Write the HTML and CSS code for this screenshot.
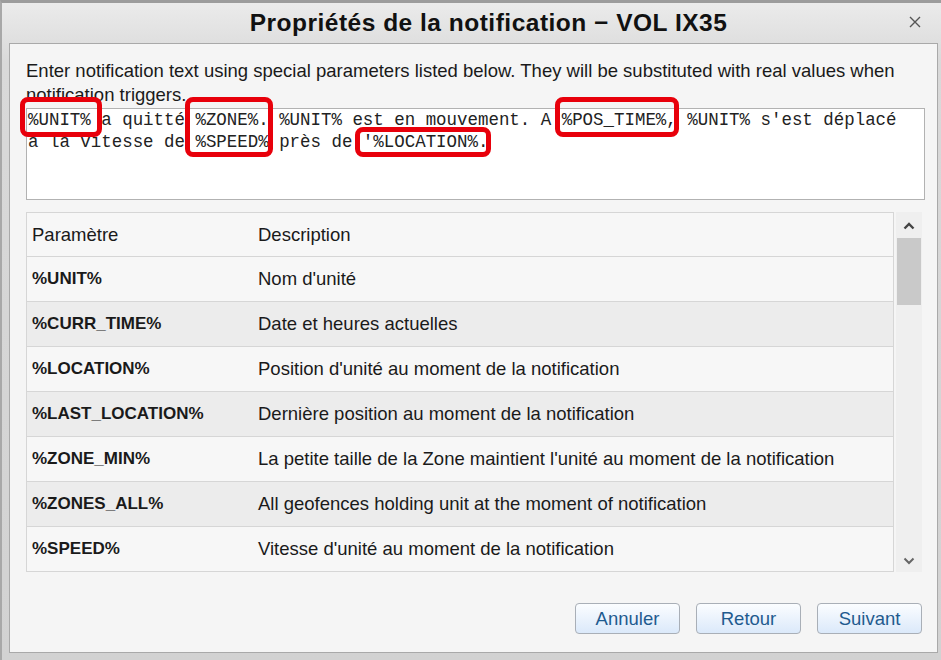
FILE: index.html
```html
<!DOCTYPE html>
<html lang="fr">
<head>
    <meta charset="UTF-8">
    <meta name="viewport" content="width=device-width, initial-scale=1.0">
    <title>Propriétés de la notification</title>
    <link rel="stylesheet" href="styles.css">
</head>
<body>
    <div class="dialog">
        <header class="titlebar">
            <h1 class="title">Propriétés de la notification − VOL IX35</h1>
            <button class="close" aria-label="Fermer">
                <svg width="12" height="12" viewBox="0 0 12 12"><path d="M1 1 L11 11 M11 1 L1 11" stroke="#555" stroke-width="1.4" fill="none"/></svg>
            </button>
        </header>

        <main class="panel">
            <p class="hint">Enter notification text using special parameters listed below. They will be substituted with real values when notification triggers.</p>

            <div class="editor-wrap">
                <div class="editor">%UNIT% a quitté %ZONE%. %UNIT% est en mouvement. A %POS_TIME%, %UNIT% s'est déplacé<br>à la vitesse de %SPEED% près de '%LOCATION%.</div>
                <span class="mark mark-unit"></span>
                <span class="mark mark-zone"></span>
                <span class="mark mark-location"></span>
                <span class="mark mark-time"></span>
            </div>

            <div class="params">
                <div class="list">
                    <div class="row head"><span>Paramètre</span><span>Description</span></div>
                    <div class="row"><b>%UNIT%</b><span>Nom d'unité</span></div>
                    <div class="row alt"><b>%CURR_TIME%</b><span>Date et heures actuelles</span></div>
                    <div class="row"><b>%LOCATION%</b><span>Position d'unité au moment de la notification</span></div>
                    <div class="row alt"><b>%LAST_LOCATION%</b><span>Dernière position au moment de la notification</span></div>
                    <div class="row"><b>%ZONE_MIN%</b><span>La petite taille de la Zone maintient l'unité au moment de la notification</span></div>
                    <div class="row alt"><b>%ZONES_ALL%</b><span>All geofences holding unit at the moment of notification</span></div>
                    <div class="row"><b>%SPEED%</b><span>Vitesse d'unité au moment de la notification</span></div>
                </div>
                <div class="scrollbar">
                    <svg class="arrow" width="12" height="8" viewBox="0 0 12 8"><path d="M1.5 6.5 L6 2 L10.5 6.5" stroke="#444" stroke-width="2.4" fill="none"/></svg>
                    <div class="thumb"></div>
                    <svg class="arrow down" width="12" height="8" viewBox="0 0 12 8"><path d="M1.5 1.5 L6 6 L10.5 1.5" stroke="#666" stroke-width="2" fill="none"/></svg>
                </div>
            </div>

            <div class="actions">
                <button class="btn">Annuler</button>
                <button class="btn">Retour</button>
                <button class="btn">Suivant</button>
            </div>
        </main>
    </div>
</body>
</html>
```

FILE: styles.css
```css
body {
    margin: 0;
    padding: 0;
    font-family: 'Liberation Sans', Arial, sans-serif;
    background: #cfcfcf;
}

.dialog {
    width: 941px;
    height: 660px;
    box-sizing: border-box;
    border-top: 3px solid #9c9c9c;
    border-left: 2px solid #a8a8a8;
    background: linear-gradient(#ebebeb, #d9d9d9 60px, #d2d2d2);
    display: flex;
    flex-direction: column;
}

.titlebar {
    height: 40px;
    display: flex;
    align-items: center;
    position: relative;
}

.title {
    flex: 1;
    margin: 0;
    padding-left: 34px;
    text-align: center;
    font-size: 24.5px;
    font-weight: bold;
    color: #111;
    letter-spacing: 0.5px;
}

.close {
    position: absolute;
    right: 20px;
    top: 13px;
    border: none;
    background: none;
    padding: 0;
    width: 12px;
    height: 12px;
    display: flex;
}

.panel {
    margin: 0 3px 7px 7px;
    flex: 1;
    background: #f5f5f5;
    border: 1px solid #a9a9a9;
    padding: 15px 15px 18px 16px;
    display: flex;
    flex-direction: column;
}

.hint {
    margin: 0;
    font-size: 18.5px;
    line-height: 24px;
    color: #1a1a1a;
}

.editor-wrap {
    position: relative;
    margin-top: 1px;
    margin-right: -3px;
}

.editor {
    height: 92px;
    box-sizing: border-box;
    background: #fff;
    border: 1px solid #b2b2b2;
    padding: 0 1px;
    font-family: 'Liberation Mono', 'Courier New', monospace;
    font-size: 17.45px;
    line-height: 22px;
    color: #222;
    white-space: pre;
    overflow: hidden;
}

.mark {
    position: absolute;
    border: 5px solid #e8000b;
    border-radius: 8px;
    box-sizing: border-box;
}

.mark-unit { left: -6px; top: -11px; width: 82px; height: 40px; }
.mark-zone { left: 159px; top: -11px; width: 88px; height: 60px; }
.mark-location { left: 329px; top: 19px; width: 136px; height: 30px; }
.mark-time { left: 529px; top: -11px; width: 124px; height: 40px; }

.params {
    margin-top: 12px;
    display: flex;
    height: 360px;
}

.list {
    width: 871px;
    box-sizing: border-box;
    border: 1px solid #d6d6d6;
    border-bottom: none;
    overflow: hidden;
}

.row {
    display: grid;
    grid-template-columns: 226px 1fr;
    height: 45px;
    box-sizing: border-box;
    align-items: center;
    padding-left: 5px;
    border-bottom: 1px solid #d6d6d6;
    background: #f7f7f7;
    font-size: 18.5px;
    color: #1a1a1a;
    white-space: nowrap;
}

.row.head {
    height: 44px;
}

.row.alt {
    background: #ececec;
}

.row b {
    font-weight: bold;
    font-size: 17px;
}

.scrollbar {
    width: 26px;
    margin-left: 2px;
    height: 360px;
    background: #efefef;
    display: flex;
    flex-direction: column;
    align-items: center;
}

.arrow {
    margin-top: 10px;
}

.arrow.down {
    margin-top: auto;
    margin-bottom: 7px;
}

.thumb {
    width: 24px;
    height: 67px;
    margin-top: 8px;
    background: #c9c9c9;
}

.actions {
    margin-top: auto;
    display: flex;
    justify-content: flex-end;
    gap: 16px;
}

.btn {
    width: 105px;
    height: 31px;
    border: 1px solid #a9afb7;
    border-radius: 4px;
    background: linear-gradient(#fbfdff, #dbe9fa);
    font-family: 'Liberation Sans', Arial, sans-serif;
    font-size: 18.5px;
    color: #1f5b8f;
    padding: 0;
}
```
